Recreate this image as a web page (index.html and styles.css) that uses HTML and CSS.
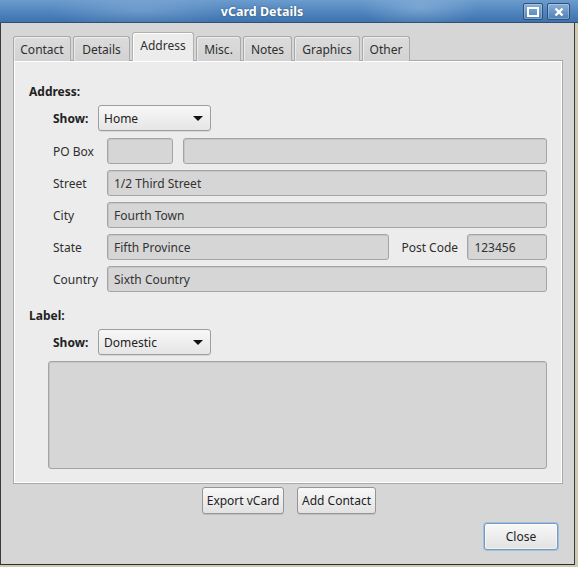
FILE: index.html
```html
<!DOCTYPE html>
<html>
<head>
<meta charset="utf-8">
<link rel="stylesheet" href="styles.css">
</head>
<body>
<div class="window">
  <div class="titlebar">
    <span class="title">vCard Details</span>
    <div class="wbtns">
      <span class="wbtn"><svg width="12" height="10" viewBox="0 0 12 10"><rect x="1" y="1" width="10" height="8" fill="none" stroke="#fff" stroke-width="2"/></svg></span>
      <span class="wbtn"><svg width="10" height="10" viewBox="0 0 10 10"><path d="M1.5 1.5 L8.5 8.5 M8.5 1.5 L1.5 8.5" stroke="#fff" stroke-width="2.4"/></svg></span>
    </div>
  </div>
  <div class="dialog">
    <div class="tabs">
      <div class="tab t-contact">Contact</div>
      <div class="tab t-details">Details</div>
      <div class="tab active t-address">Address</div>
      <div class="tab t-misc">Misc.</div>
      <div class="tab t-notes">Notes</div>
      <div class="tab t-graphics">Graphics</div>
      <div class="tab t-other">Other</div>
    </div>
    <div class="panel">
      <div class="heading">Address:</div>
      <div class="showrow">
        <span class="showlabel">Show:</span>
        <div class="combo"><span>Home</span><span class="arrow"></span></div>
      </div>
      <div class="rows">
        <div class="row">
          <span class="lbl">PO Box</span>
          <div class="field f-po1"></div>
          <div class="field f-po2"></div>
        </div>
        <div class="row">
          <span class="lbl">Street</span>
          <div class="field grow">1/2 Third Street</div>
        </div>
        <div class="row">
          <span class="lbl">City</span>
          <div class="field grow">Fourth Town</div>
        </div>
        <div class="row">
          <span class="lbl">State</span>
          <div class="field f-state">Fifth Province</div>
          <span class="lbl2">Post Code</span>
          <div class="field f-post">123456</div>
        </div>
        <div class="row">
          <span class="lbl">Country</span>
          <div class="field grow">Sixth Country</div>
        </div>
      </div>
      <div class="heading h-label">Label:</div>
      <div class="showrow">
        <span class="showlabel">Show:</span>
        <div class="combo"><span>Domestic</span><span class="arrow"></span></div>
      </div>
      <div class="textarea"></div>
    </div>
    <div class="actions">
      <button class="btn b-export">Export vCard</button>
      <button class="btn b-add">Add Contact</button>
    </div>
    <div class="closerow">
      <button class="btn b-close">Close</button>
    </div>
  </div>
</div>
</body>
</html>
```
FILE: styles.css
```css
html, body {
  margin: 0;
  padding: 0;
}
body {
  width: 578px;
  height: 567px;
  overflow: hidden;
  background: #cfcbb0;
  font-family: "Noto Sans", "Open Sans", sans-serif;
  font-size: 12px;
  color: #2f2f2f;
}
.window {
  width: 575px;
  height: 565px;
  background: #d6d6d6;
  border-left: 1px solid #3a3a3a;
  border-right: 1px solid #3a3a3a;
  border-bottom: 1px solid #2e2e2e;
  box-sizing: border-box;
  display: flex;
  flex-direction: column;
  position: relative;
}
.titlebar {
  height: 23px;
  margin-left: -1px;
  width: 578px;
  box-sizing: border-box;
  border-bottom: 1px solid #2f5077;
  background:
    radial-gradient(ellipse 60px 20px at 420px 8px, rgba(180,210,235,0.35), rgba(180,210,235,0)),
    radial-gradient(ellipse 90px 18px at 140px 10px, rgba(170,200,230,0.3), rgba(170,200,230,0)),
    linear-gradient(#6d9ccd, #4f84be 55%, #3f73ad);
  display: flex;
  align-items: center;
  justify-content: center;
  position: relative;
}
.title {
  color: #fff;
  font-weight: bold;
  font-size: 12.5px;
  text-shadow: 0 0 2px rgba(0,0,0,0.4);
  margin-left: -54px;
}
.wbtns {
  position: absolute;
  right: 8px;
  top: 3px;
  display: flex;
  gap: 4px;
}
.wbtn {
  width: 20px;
  height: 17px;
  box-sizing: border-box;
  border: 1px solid #2d4f78;
  border-radius: 2px;
  background: linear-gradient(rgba(255,255,255,0.25), rgba(255,255,255,0.05));
  box-shadow: inset 0 0 0 1px rgba(255,255,255,0.25);
  display: flex;
  align-items: center;
  justify-content: center;
}
.wbtn:last-child { width: 23px; }
.dialog {
  flex: 1;
  display: flex;
  flex-direction: column;
  padding: 10px 11px 0 12px;
}
.tabs {
  display: flex;
  align-items: flex-end;
  height: 28px;
  position: relative;
  z-index: 1;
  margin-bottom: -1px;
}
.tab {
  height: 25px;
  box-sizing: border-box;
  border: 1px solid #a9a9a9;
  border-bottom: none;
  border-radius: 3px 3px 0 0;
  background: linear-gradient(#dcdcdc, #d2d2d2);
  box-shadow: inset 1px 1px 0 rgba(255,255,255,0.5);
  display: flex;
  align-items: center;
  justify-content: center;
  padding-top: 1px;
  margin-right: 2px;
  color: #2f2f2f;
}
.tab.active {
  height: 29px;
  background: #ececec;
  box-shadow: inset 1px 1px 0 #fff;
  padding-bottom: 4px;
  border-color: #b0b0b0;
}
.t-contact { width: 58px; }
.t-details { width: 57px; }
.t-address { width: 62px; }
.t-misc { width: 45px; }
.t-notes { width: 49px; }
.t-graphics { width: 66px; }
.t-other { width: 48px; }
.panel {
  height: 424px;
  box-sizing: border-box;
  background: #ececec;
  border: 1px solid #a9a9a9;
  box-shadow: inset -1px -1px 0 #fff, inset 1px 1px 0 #fff;
  padding: 22px 15px 0 15px;
  display: flex;
  flex-direction: column;
}
.heading {
  font-weight: bold;
  color: #222;
  height: 18px;
  line-height: 18px;
  margin-bottom: 4px;
}
.h-label {
  margin-top: 15px;
  margin-bottom: 4px;
}
.showrow {
  display: flex;
  align-items: center;
  margin-left: 24px;
  height: 26px;
}
.showlabel {
  font-weight: bold;
  color: #222;
  width: 45px;
}
.combo {
  width: 113px;
  height: 26px;
  box-sizing: border-box;
  border: 1px solid #9e9e9e;
  border-radius: 3px;
  background: linear-gradient(#f7f7f7, #e6e6e6);
  box-shadow: 0 1px 0 rgba(0,0,0,0.08);
  display: flex;
  align-items: center;
  justify-content: space-between;
  padding: 0 7px 0 5px;
  color: #222;
}
.arrow {
  width: 0;
  height: 0;
  border-left: 5px solid transparent;
  border-right: 5px solid transparent;
  border-top: 5px solid #111;
}
.rows {
  display: flex;
  flex-direction: column;
  gap: 6px;
  margin-top: 7px;
  margin-left: 24px;
}
.row {
  display: flex;
  align-items: center;
  height: 26px;
}
.lbl {
  width: 54px;
  flex: none;
}
.lbl2 {
  margin-left: 12px;
  width: 66px;
  flex: none;
}
.field {
  height: 26px;
  box-sizing: border-box;
  background: #d6d6d6;
  border: 1px solid #a4a4a4;
  border-radius: 3px;
  box-shadow: inset 1px 1px 0 #c6c6c6;
  padding: 0 6px;
  display: flex;
  align-items: center;
  color: #333;
}
.grow { flex: 1; }
.f-po1 { width: 66px; margin-right: 10px; }
.f-po2 { flex: 1; }
.f-state { width: 284px; }
.f-post { width: 80px; }
.textarea {
  margin: 6px 0 0 19px;
  height: 108px;
  box-sizing: border-box;
  background: #d6d6d6;
  border: 1px solid #a4a4a4;
  border-radius: 3px;
  box-shadow: inset 1px 1px 0 #c6c6c6;
}
.actions {
  display: flex;
  justify-content: center;
  gap: 13px;
  margin-top: 3px;
  padding-left: 2px;
}
.btn {
  font-family: "Noto Sans", "Open Sans", sans-serif;
  font-size: 12px;
  color: #222;
  height: 27px;
  box-sizing: border-box;
  border: 1px solid #959595;
  border-radius: 3px;
  background: linear-gradient(#f8f8f8, #e2e2e2);
  box-shadow: 0 1px 0 rgba(0,0,0,0.1);
  padding: 0;
  margin: 0;
}
.b-export { width: 82px; }
.b-add { width: 79px; }
.closerow {
  display: flex;
  justify-content: flex-end;
  margin-top: 9px;
  padding-right: 5px;
}
.b-close {
  width: 74px;
  border-color: #7b98b8;
  box-shadow: 0 0 0 1px #9cc1e6, inset 0 0 0 1px rgba(255,255,255,0.6);
}
```
